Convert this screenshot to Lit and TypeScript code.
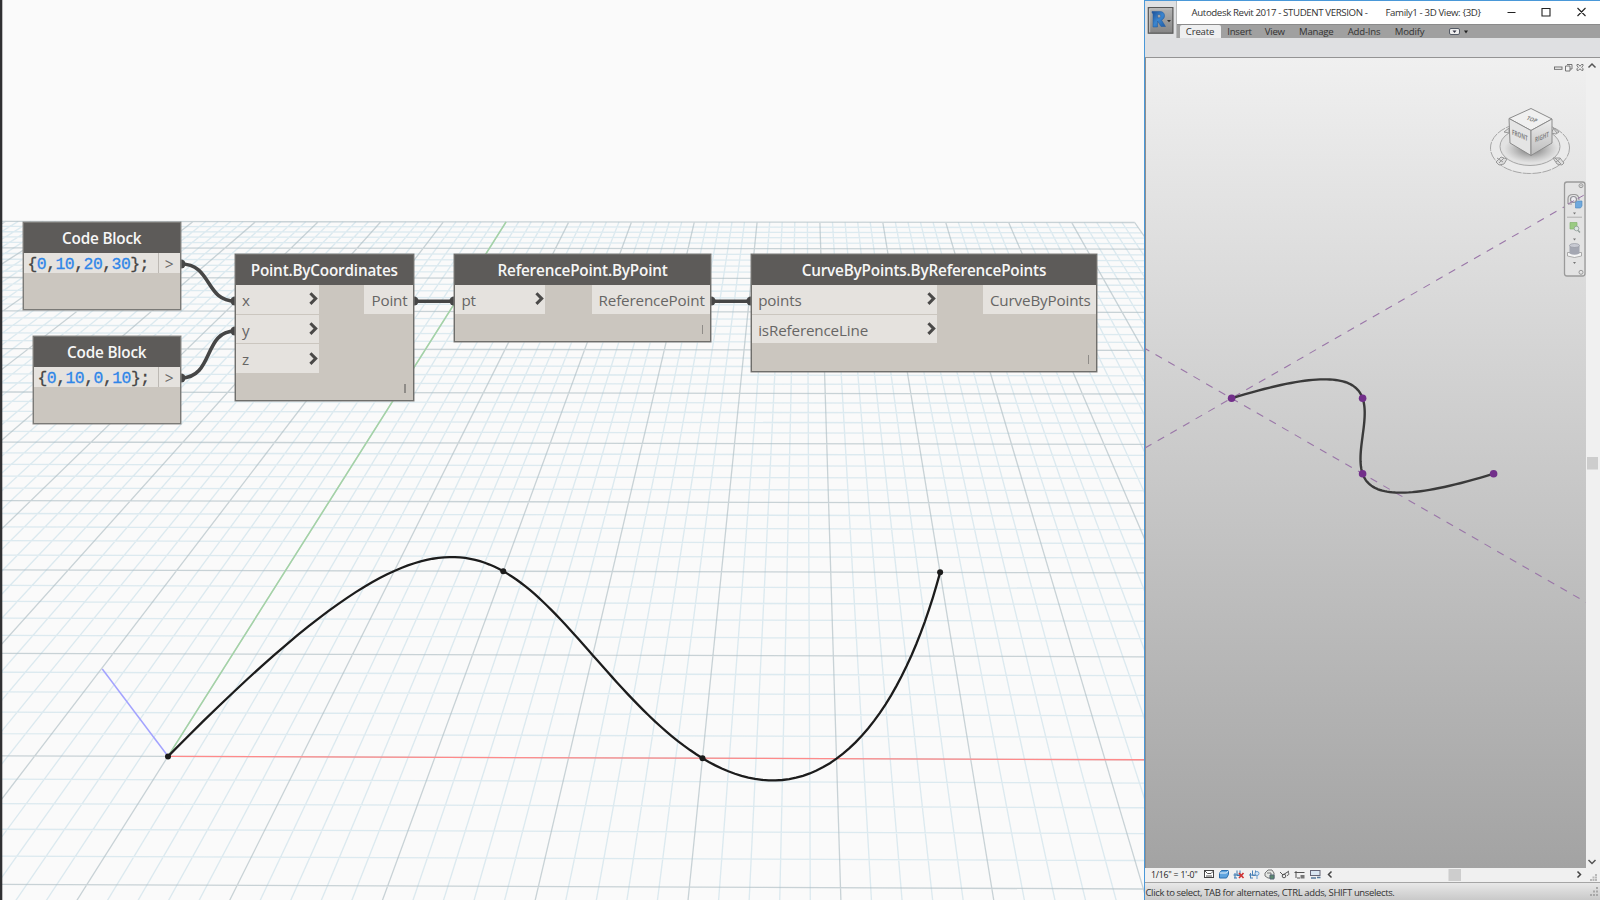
import { LitElement, html, svg, css } from "lit";
import { customElement, property } from "lit/decorators.js";

type Pt = [number, number];

// Perspective of the workspace ground plane.
const ground = (x: number, y: number): Pt => {
  const w = 1 - 0.00012 * x + 0.0226 * y;
  return [(168 + 26.64 * x + 18.2 * y) / w, (756.4 - 5.676 * y) / w];
};
// Isometric projection of the Revit view.
const iso = (x: number, y: number): Pt => [1231.6 + 6.55 * (x + y), 398.3 + 3.77 * (x - y)];

const POINTS: Pt[] = [[0, 0], [10, 10], [20, 0], [30, 10]];

// Cubic through the four control points, parameter 0..3.
const curve = (project: (x: number, y: number) => Pt) => {
  const out: string[] = [];
  for (let i = 0; i <= 120; i++) {
    const t = i / 40;
    const y = 10 * t - 10 * t * (t - 1) + (20 / 3) * t * (t - 1) * (t - 2);
    out.push(project(10 * t, y).map((n) => n.toFixed(2)).join(","));
  }
  return out.join(" ");
};

const seg = (a: Pt, b: Pt) =>
  `M${a[0].toFixed(1)} ${a[1].toFixed(1)}L${b[0].toFixed(1)} ${b[1].toFixed(1)}`;

const gridLines = () => {
  let minor = "";
  let major = "";
  for (let i = -50; i <= 50; i++) {
    const v = seg(ground(i, 50), ground(i, -12));
    const h = i >= -12 ? seg(ground(-50, i), ground(50, i)) : "";
    if (i % 5 === 0) major += v + h;
    else minor += v + h;
  }
  return { minor, major };
};

@customElement("flow-node")
class FlowNode extends LitElement {
  @property() title = "";
  @property({ attribute: false }) inputs: string[] = [];
  @property() output = "";
  @property({ type: Number }) inw = 0;

  static styles = css`
    :host { display: flex; flex-direction: column; box-sizing: border-box; border: 1px solid #6f6e6b;
      box-shadow: 0 0 0 0.5px #807f7c; background: #cbc6bf; position: absolute;
      font-family: "Open Sans", "Noto Sans", sans-serif; }
    .head { height: 30px; background: #5d5b59; color: #f6f6f6; font-size: 15.3px; font-weight: 600;
      letter-spacing: -0.2px; line-height: 31px; text-align: center; white-space: nowrap; margin: -0.5px -0.5px 0; }
    .body { display: flex; justify-content: space-between; align-items: flex-start; flex: 1; }
    .ins { display: flex; flex-direction: column; gap: 1px; }
    .port { box-sizing: border-box; height: 28.8px; background: #e5e2de; color: #676665; font-size: 15.2px;
      letter-spacing: -0.15px; line-height: 30px; display: flex; justify-content: space-between; padding: 0 1px 0 6px; }
    .out { padding: 0 5px 0 7px; }
    .chev { width: 9px; height: 14px; margin-top: 7.5px; }
    .lace { width: 1.6px; height: 9px; background: #8f8c88; margin: 0 6.5px 7px auto; }
  `;
  render() {
    return html`<div class="head">${this.title}</div>
      <div class="body">
        <div class="ins" style="width:${this.inw}px">
          ${this.inputs.map((n) => html`<div class="port"><span>${n}</span>
            <svg class="chev" viewBox="0 0 9 14"><path d="M1.4 1.300L6.700 6.600L1.4 11.900" fill="none" stroke="#4a4948" stroke-width="3"/></svg></div>`)}
        </div>
        <div class="port out">${this.output}</div>
      </div>
      <div class="lace"></div>`;
  }
}

@customElement("code-block")
class CodeBlock extends LitElement {
  @property() code = "";
  static styles = css`
    :host { display: flex; flex-direction: column; box-sizing: border-box; border: 1px solid #7b7a77;
      box-shadow: 0 0 0 0.5px #8b8a87; background: #cbc6bf; position: absolute;
      font-family: "Open Sans", "Noto Sans", sans-serif; }
    .head { height: 30px; background: #5d5b59; color: #f6f6f6; font-size: 15.3px; font-weight: 600;
      letter-spacing: -0.2px; line-height: 31px; text-align: center; margin: -0.5px -0.5px 0; }
    .row { display: flex; height: 20px; background: #e5e2de; }
    .code { flex: 1; font-family: "Liberation Mono", monospace; font-size: 16.4px; letter-spacing: -0.5px; line-height: 24.5px; color: #444;
      padding-left: 3.5px; white-space: pre; -webkit-text-stroke: 0.3px currentColor; }
    .num { color: #2f86e8; }
    .out { width: 20.5px; border-left: 1px solid #bdb9b4; text-align: center; font-size: 15.5px; line-height: 22.5px; color: #6a6968; }
  `;
  render() {
    const parts = this.code.split(/(\d+)/);
    return html`<div class="head">Code Block</div>
      <div class="row"><div class="code">${parts.map((p) => (/\d/.test(p) ? html`<span class="num">${p}</span>` : p))}</div>
      <div class="out">&gt;</div></div>`;
  }
}

@customElement("dynamo-workspace")
class DynamoWorkspace extends LitElement {
  static styles = css`
    :host { display: block; position: relative; width: 1144px; height: 900px; background: #fafafa; overflow: hidden; }
    .scene { display: block; }
    .cb1 { left: 23px; top: 222.4px; width: 157.5px; height: 88px; }
    .cb2 { left: 33px; top: 336.2px; width: 147.5px; height: 88px; }
    .pbc { left: 235px; top: 254.4px; width: 178.5px; height: 146.5px; }
    .rpb { left: 454.4px; top: 254.4px; width: 256.3px; height: 88px; }
    .cbp { left: 751.2px; top: 254.4px; width: 345.5px; height: 117.5px; }
  `;
  render() {
    const { minor, major } = gridLines();
    const ends: Pt[] = [[181, 264], [235, 301], [181, 378], [235, 331], [414, 301], [454, 301], [711, 301], [751, 301]];
    const o = ground(0, 0);
    return html`
      <svg class="scene" width="1144" height="900" viewBox="0 0 1144 900" fill="none">
        <path d=${minor} stroke="#bdd9e6" stroke-opacity=".5" stroke-width="1.3"/>
        <path d=${major} stroke="#aebdc4" stroke-opacity=".66" stroke-width="1.3"/>
        <path d=${seg(o, ground(36.8, 0))} stroke="#ff8a8a" stroke-width="1.3"/>
        <path d=${seg(o, ground(0, 50))} stroke="#a3d3a5" stroke-width="1.5"/>
        <path d="M168 756.3L102.3 669" stroke="#a3a3ff" stroke-width="1.5"/>
        <polyline points=${curve(ground)} stroke="#1c1c1c" stroke-width="2.3"/>
        ${POINTS.map((p) => { const [x, y] = ground(p[0], p[1]); return svg`<circle cx=${x} cy=${y} r="3" fill="#1c1c1c"/>`; })}
        <g stroke="#464646" stroke-width="3.6">
          <path d="M181 264C212 264 205 301 235 301"/>
          <path d="M181 378C214 378 203 331 235 331"/>
          <path d="M414 301.3H454M711 301.3H751"/>
        </g>
        ${ends.map(([x, y]) => svg`<circle cx=${x} cy=${y} r="4.6" fill="#464646"/>`)}
        <path d="M0 0H2.3V900H0z" fill="#303032"/>
      </svg>
      <code-block class="cb1" .code=${"{0,10,20,30};"}></code-block>
      <code-block class="cb2" .code=${"{0,10,0,10};"}></code-block>
      <flow-node class="pbc" .title=${"Point.ByCoordinates"} .inputs=${["x", "y", "z"]} .inw=${83} .output=${"Point"}></flow-node>
      <flow-node class="rpb" .title=${"ReferencePoint.ByPoint"} .inputs=${["pt"]} .inw=${90} .output=${"ReferencePoint"}></flow-node>
      <flow-node class="cbp" .title=${"CurveByPoints.ByReferencePoints"} .inputs=${["points", "isReferenceLine"]} .inw=${185} .output=${"CurveByPoints"}></flow-node>`;
  }
}

@customElement("revit-window")
class RevitWindow extends LitElement {
  static styles = css`
    :host { display: flex; flex-direction: column; box-sizing: border-box; width: 456px; height: 900px;
      border: 1px solid #4a98d8; border-width: 1px 0 0 1px; background: #f0f0f0; color: #333;
      font-family: "Open Sans", "Noto Sans", sans-serif; }
    .top { display: grid; grid-template-columns: 32px 1fr; height: 37px; background: #fff; }
    .app { background: #e0e1e3; border-right: 1px solid #b9babb; box-sizing: border-box; padding: 5px 0 0 2px; height: 37px; }
    .app svg { display: block; }
    .titlebar { display: flex; height: 22.5px; align-items: center; font-size: 9.7px; letter-spacing: -0.38px; white-space: pre; }
    .t1 { margin-left: 14.500px; width: 194px; }
    .t2 { width: 105px; flex: none; }
    .ctl { display: block; width: 110px; height: 22px; margin-left: auto; flex: none; }
    .tabs { display: flex; height: 14.500px; background: #a0a0a0; border-top: 1px solid #8b8b8b; box-sizing: border-box;
      font-size: 9.6px; letter-spacing: -0.2px; line-height: 14.500px; white-space: nowrap; }
    .tab { text-align: center; }
    .tab.on { background: #eeeff0; width: 41px; margin-left: 2.500px; border-radius: 2px 2px 0 0; }
    .w1 { width: 38px; } .w2 { width: 32.5px; } .w3 { width: 50.5px; } .w4 { width: 45px; } .w5 { width: 46px; }
    .more { margin-left: 15px; }
    .ribbon { height: 20px; box-sizing: border-box; background: #dfe0e2; border-bottom: 1px solid #949494; }
    .mid { display: flex; height: 810px; }
    .view { display: block; width: 441px; height: 810px; background: linear-gradient(#f0f0f0, #a3a3a3); }
    .vscroll { display: block; width: 14px; height: 810px; }
    .bar { display: flex; height: 14px; align-items: center; font-size: 8.7px; letter-spacing: -0.2px; white-space: pre; color: #222; line-height: 12px; }
    .scale { margin-left: 6px; width: 50px; }
    .strip { display: block; flex: none; }
    .status { height: 18px; background: linear-gradient(#e8e8e8, #c9c9c9); border-top: 1px solid #a5a5a5;
      font-size: 9.5px; letter-spacing: -0.36px; line-height: 19px; white-space: nowrap; box-sizing: border-box; display: flex; justify-content: space-between; padding-left: 0.5px; }
  `;
  render() {
    return html`
      <div class="top">
        <div class="app">
          <svg width="27" height="28" viewBox="0 0 27 28">
            <defs><linearGradient id="ag" x2="0" y2="1"><stop stop-color="#b3b3b3"/><stop offset="1" stop-color="#858585"/></linearGradient>
            <linearGradient id="rg" x2="1" y2="1"><stop stop-color="#1c4f96"/><stop offset=".5" stop-color="#3c86cf"/><stop offset="1" stop-color="#1d5ba4"/></linearGradient></defs>
            <rect x="1.300" y="1.600" width="24.6" height="25.6" fill="url(#ag)" stroke="#575757" stroke-width="1.2"/>
            <path d="M2.700 26.300V2.800H25" fill="none" stroke="#d0d0d0" stroke-width=".8"/>
            <path d="M5 5.500H13C18.500 5.500 19 12.500 14.500 14L18.500 20.500H14L10.500 15V21H6V8L5 6.500z M10.500 8.500V11.800H12.200C14.300 11.800 14.300 8.500 12.200 8.500z" fill="url(#rg)" fill-rule="evenodd" stroke="#1e58a0" stroke-width=".5"/>
            <path d="M20 14H24L22 16.300z" fill="#333"/>
          </svg>
        </div>
        <div>
          <div class="titlebar"><span class="t1">Autodesk Revit 2017 - STUDENT VERSION -</span><span class="t2">Family1 - 3D View: {3D}</span>
            <svg class="ctl" viewBox="1491 1 110 22" fill="none" stroke="#222" stroke-width="1.100"><path d="M1507.500 12.500H1515.500M1542 8.500H1550V16H1542zM1577.500 8L1585.500 16M1585.500 8L1577.500 16"/></svg>
          </div>
          <div class="tabs"><span class="tab on">Create</span><span class="tab w1">Insert</span><span class="tab w2">View</span><span class="tab w3">Manage</span><span class="tab w4">Add-Ins</span><span class="tab w5">Modify</span>
            <svg class="more" width="24" height="13" viewBox="0 0 24 13"><rect x="1.500" y="3.500" width="10" height="6" rx="1.500" fill="#eee" stroke="#555b66"/><path d="M4.500 5.500H8.500L6.500 8z" fill="#334"/><path d="M16 5.500H20L18 8.500z" fill="#222"/></svg>
          </div>
        </div>
      </div>
      <div class="ribbon"></div>
      <div class="mid">${this.view()}
        <svg class="vscroll" viewBox="1586 58 14 810" fill="none">
          <path d="M1588.500 67.500L1592 64L1595.500 67.500M1588.500 860L1592 863.500L1595.500 860" stroke="#555" stroke-width="1.500"/>
          <path d="M1587 457H1598V469.500H1587z" fill="#cdcdcd"/>
        </svg>
      </div>
      <div class="bar"><span class="scale">1/16" = 1'-0"</span>${this.strip()}</div>
      <div class="status"><span>Click to select, TAB for alternates, CTRL adds, SHIFT unselects.</span>
        <svg width="12" height="16" viewBox="0 0 12 16" fill="#a8a8a8"><path d="M8 4h2v2h-2zM5 7.500h2v2h-2zM8 7.500h2v2h-2zM2 11h2v2h-2zM5 11h2v2h-2zM8 11h2v2h-2z"/></svg>
      </div>`;
  }

  view() {
    return html`<svg class="view" viewBox="1145 58 441 810" fill="none">
      <defs>
        <radialGradient id="sh"><stop offset=".3" stop-color="#777" stop-opacity=".7"/><stop offset="1" stop-color="#999" stop-opacity="0"/></radialGradient>
        <linearGradient id="cl" x2="0" y2="1"><stop stop-color="#eee"/><stop offset="1" stop-color="#bcbcbc"/></linearGradient>
      </defs>
      <path d="M1145.500 868V58" stroke="#8e8e8e"/>
      <g stroke="#9a76a8" stroke-width="1.100" stroke-dasharray="7.500 7.100">
        <path d="M1145 448L1564 207"/><path d="M1145 348.500L1586 602.300" stroke-dashoffset="2.500"/>
      </g>
      <polyline points=${curve(iso)} stroke="#3a3a3a" stroke-width="2.400"/>
      ${POINTS.map((p) => { const [x, y] = iso(p[0], p[1]); return svg`<circle cx=${x} cy=${y} r="3.800" fill="#722f8a"/>`; })}
      <g stroke="#666" stroke-width=".9" fill="#f2f2f2">
        <rect x="1554.500" y="67" width="7.500" height="2.300"/>
        <path d="M1567 64.500H1572V69H1570M1565.500 66H1570V71H1565.500z"/>
        <path d="M1577 64.500l1.500 0l1.500 1.800l1.500-1.800h1.500v1.300l-1.300 1.500l1.300 1.500v1.500h-1.500l-1.500-1.600l-1.500 1.600h-1.500v-1.500l1.300-1.500l-1.300-1.500z"/>
      </g>
      <g stroke="#a6a6a6" stroke-width="1">
        <ellipse cx="1530" cy="148" rx="39.500" ry="25.500" fill="#eaeaea" stroke-dasharray="9 1"/>
        <ellipse cx="1530" cy="146.500" rx="30" ry="19" fill="#e2e2e2"/>
      </g>
      <ellipse cx="1531" cy="149" rx="27" ry="14" fill="url(#sh)"/>
      <g stroke="#999" fill="#ddd" stroke-width="1"><path d="M1496 162l5-5l6 2l-3 5l-5 1z M1499 163l5-5M1497 158l6 4"/><path d="M1564 163l-4-5h-7l4 6l5 1z M1555 158l6 6M1556 162l5-4"/><path d="M1504 132l5-4v5z M1551 133l3-5l5 4l-3 2z M1553 128l4 5"/></g>
      <g stroke="#8b8b8b" stroke-width="1" stroke-linejoin="round">
        <path d="M1509 118.500L1531 108.500L1552 119L1531 130.500z" fill="#f0f0f0"/>
        <path d="M1509 118.500L1531 130.500V155.500L1510 143z" fill="#e4e4e4"/>
        <path d="M1552 119L1531 130.500V155.500L1552 143z" fill="url(#cl)"/>
      </g>
      <g font-family="Open Sans" font-weight="700" fill="#858585" stroke="none">
        <text transform="matrix(.9 .3 -.5 .75 1526 119.500)" font-size="6.500" textLength="11" lengthAdjust="spacingAndGlyphs">TOP</text>
        <text transform="matrix(.87 .36 0 1.150 1512 134.500)" font-size="6.300" textLength="18" lengthAdjust="spacingAndGlyphs">FRONT</text>
        <text transform="matrix(.87 -.36 0 1.150 1535 142.500)" font-size="6.300" textLength="16" lengthAdjust="spacingAndGlyphs">RIGHT</text>
      </g>
      <rect x="1564.500" y="182" width="20.500" height="94" rx="2.500" fill="#e3e3e3" stroke="#9a9a9a" stroke-width="1.300"/>
      <circle cx="1581" cy="185.700" r="2" stroke="#999"/><path d="M1579.800 185.700h2.400" stroke="#999" stroke-width=".7"/>
      <circle cx="1581" cy="272.300" r="2" stroke="#999"/>
      <path d="M1567 217.200H1582" stroke="#b0b0b0"/>
      <path d="M1568 204V199Q1568 194.500 1573 194.500H1575Q1579 195 1579 200M1568 204h4" stroke="#9a9a9a" stroke-width="1.200"/>
      <circle cx="1573.500" cy="199.500" r="3" stroke="#909098" stroke-width="1.200" fill="#ededf0"/>
      <path d="M1568 204L1586 194" stroke="#9a76a8" stroke-dasharray="7 4"/>
      <path d="M1575.500 202.500L1577.500 201H1582V206L1580.500 208H1575.500z" fill="#6fa9dd" stroke="#4b87bd" stroke-width=".6"/>
      <path d="M1570 222.500H1577V229H1570z" fill="#9acb82" stroke="#83b46d" stroke-width=".7"/>
      <circle cx="1576.500" cy="228.500" r="2.300" fill="#dde7e2" stroke="#8f9c97" stroke-width=".8"/><path d="M1578 230.500L1580 232.500" stroke="#8f9c97" stroke-width="1.200"/>
      <path d="M1567.500 252.500h14v3.500q-7 3-14 0z" fill="#f5f5f5" stroke="#999" stroke-width=".8"/>
      <path d="M1569.500 245.500v8q5 2.500 10 0v-8z" fill="#a4a7b2"/><ellipse cx="1574.500" cy="245.500" rx="5" ry="2" fill="#c8cad2" stroke="#8d909a" stroke-width=".6"/>
      <path d="M1573 212.500h3l-1.500 2zM1573 238.500h3l-1.500 2zM1573 262h3l-1.500 2z" fill="#777"/>
    </svg>`;
  }

  strip() {
    return html`<svg class="strip" width="399" height="14" viewBox="1201 868 399 14" fill="none" stroke-width="1">
      <rect x="1204.500" y="870.500" width="9" height="7" fill="#fff" stroke="#444"/><path d="M1205 871l2.500 2.500h3.500l2.500-2.500M1206 876h6" stroke="#555"/>
      <path d="M1219.500 873l2-2.500h7v4l-2 3.500h-7z" fill="#5fa4df" stroke="#2d6fae"/><path d="M1219.500 873h7l2-2.500" stroke="#e7f2fb"/>
      <path d="M1233.500 875h9M1235 873v5M1237 870.500v5h3v-5M1234 878h3" stroke="#3b79b0"/><path d="M1239 873l4.500 5M1243.500 873l-4.500 5" stroke="#d23333" stroke-width="1.600"/>
      <path d="M1249 875h9M1250.500 873v5M1252.500 870.500v5h3v-5M1250 878h3" stroke="#4b82b8"/><circle cx="1257" cy="873.500" r="2" fill="#d8e8f8" stroke="#6a9bcb"/><path d="M1257 876v3" stroke="#6a9bcb"/>
      <path d="M1265 873l3-3h4l2 3v5h-6l-3-2zM1267 873h4v4" stroke="#777" fill="#e4e7e4"/><path d="M1270 875h4v4h-4z" fill="#5b8a6e" stroke="#567"/>
      <path d="M1280 872l3 3l3-2l3-2M1288 872q2 3-1 3.500" stroke="#555"/><circle cx="1284" cy="876" r="1.800" stroke="#555"/>
      <path d="M1296 871v7M1294.500 872.500h10M1297 878h3" stroke="#555"/><path d="M1300.500 875h4v3.500h-4z" fill="#777"/>
      <rect x="1310.500" y="870.500" width="9.500" height="5" fill="#d9e6f2" stroke="#667"/><path d="M1311 878h5M1317 877.500h3.500" stroke="#56789a" stroke-width="1.500"/>
      <path d="M1331.500 871.500L1328.500 874.500L1331.500 877.500M1577.500 871.500L1580.500 874.500L1577.500 877.500" stroke="#444" stroke-width="1.500"/>
      <path d="M1448.500 869H1461V881H1448.500z" fill="#cdcdcd"/>
      <path d="M1595 874h2v2h-2zM1592.500 876.500h2v2h-2zM1595 876.500h2v2h-2zM1590 879h2v2h-2zM1592.500 879h2v2h-2zM1595 879h2v2h-2z" fill="#b9b9b9"/>
    </svg>`;
  }
}

@customElement("app-root")
class AppRoot extends LitElement {
  static styles = css`
    :host { display: flex; width: 1600px; height: 900px; overflow: hidden; background: #fafafa; }
  `;
  render() {
    return html`<dynamo-workspace></dynamo-workspace><revit-window></revit-window>`;
  }
}
